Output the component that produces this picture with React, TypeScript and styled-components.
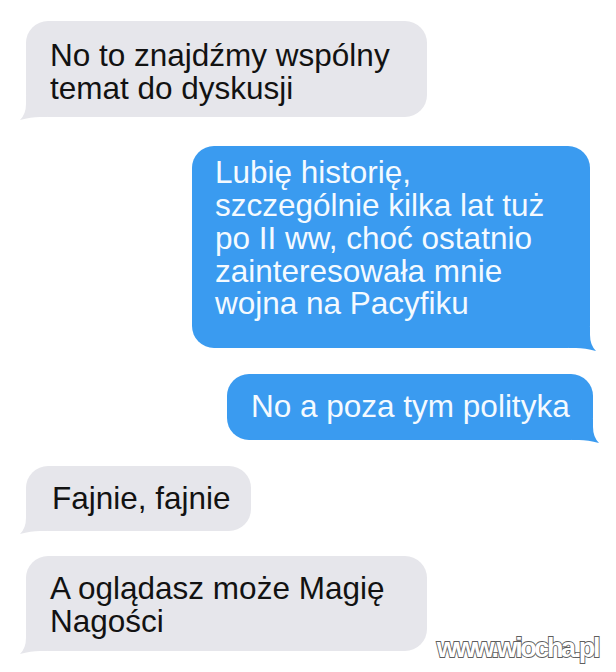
import React from "react";
import styled, { createGlobalStyle } from "styled-components";

const Global = createGlobalStyle`
  html, body { margin: 0; padding: 0; background: #ffffff; }
  body { width: 616px; height: 672px; overflow: hidden; }
`;

const Page = styled.div`
  position: relative;
  width: 616px;
  height: 672px;
  box-sizing: border-box;
  padding-top: 21px;
  display: flex;
  flex-direction: column;
  font-family: "Liberation Sans", Arial, Helvetica, sans-serif;
`;

type Side = "left" | "right";

const Row = styled.div<{ $side: Side; $gap: number; $inset: number }>`
  display: flex;
  justify-content: ${(p) => (p.$side === "left" ? "flex-start" : "flex-end")};
  margin-top: ${(p) => p.$gap}px;
  padding-left: ${(p) => (p.$side === "left" ? p.$inset : 0)}px;
  padding-right: ${(p) => (p.$side === "right" ? p.$inset : 0)}px;
`;

const Bubble = styled.div<{
  $side: Side;
  $w: number;
  $pad: string;
}>`
  position: relative;
  box-sizing: border-box;
  width: ${(p) => p.$w}px;
  padding: ${(p) => p.$pad};
  border-radius: 22px;
  background: ${(p) => (p.$side === "left" ? "#e6e6eb" : "#3a9bf0")};
  color: ${(p) => (p.$side === "left" ? "#121212" : "#f4faff")};
  font-size: 31.5px;
  line-height: 32.7px;
  white-space: pre-line;
`;

const Tail = styled.svg<{ $side: Side }>`
  position: absolute;
  bottom: -3px;
  width: 28px;
  height: 24px;
  ${(p) => (p.$side === "left" ? "left: -7px;" : "right: -7px; transform: scaleX(-1);")}
`;

const Watermark = styled.div`
  position: absolute;
  right: 18px;
  bottom: 10px;
  font-family: "Liberation Sans", Arial, sans-serif;
  font-weight: bold;
  font-size: 27px;
  line-height: 27px;
  letter-spacing: -2.4px;
  color: #ffffff;
  -webkit-text-stroke: 1.8px #5e5e5e;
  paint-order: stroke fill;
`;

function BubbleTail({ side }: { side: Side }) {
  const fill = side === "left" ? "#e6e6eb" : "#3a9bf0";
  return (
    <Tail $side={side} viewBox="0 0 28 24">
      <path d="M7 0 L28 0 L28 21 L21 21 Q12 21 1 24 Q7 18 7 8 Z" fill={fill} />
    </Tail>
  );
}

type Msg = {
  side: Side;
  text: string;
  w: number;
  pad: string;
  gap: number;
  inset: number;
};

const messages: Msg[] = [
  {
    side: "left",
    text: "No to znajdźmy wspólny\ntemat do dyskusji",
    w: 401,
    pad: "18px 10px 13px 24px",
    gap: 0,
    inset: 26,
  },
  {
    side: "right",
    text: "Lubię historię,\nszczególnie kilka lat tuż\npo II ww, choć ostatnio\nzainteresowała mnie\nwojna na Pacyfiku",
    w: 398,
    pad: "10px 10px 28px 23px",
    gap: 29,
    inset: 26,
  },
  {
    side: "right",
    text: "No a poza tym polityka",
    w: 366,
    pad: "16px 10px 17px 24px",
    gap: 26,
    inset: 23,
  },
  {
    side: "left",
    text: "Fajnie, fajnie",
    w: 225,
    pad: "16px 10px 17px 26px",
    gap: 26,
    inset: 26,
  },
  {
    side: "left",
    text: "A oglądasz może Magię\nNagości",
    w: 401,
    pad: "16px 10px 13px 24px",
    gap: 25,
    inset: 26,
  },
];

export default function App() {
  return (
    <>
      <Global />
      <Page>
        {messages.map((m, i) => (
          <Row key={i} $side={m.side} $gap={m.gap} $inset={m.inset}>
            <Bubble $side={m.side} $w={m.w} $pad={m.pad}>
              {m.text}
              <BubbleTail side={m.side} />
            </Bubble>
          </Row>
        ))}
        <Watermark>www.wiocha.pl</Watermark>
      </Page>
    </>
  );
}
